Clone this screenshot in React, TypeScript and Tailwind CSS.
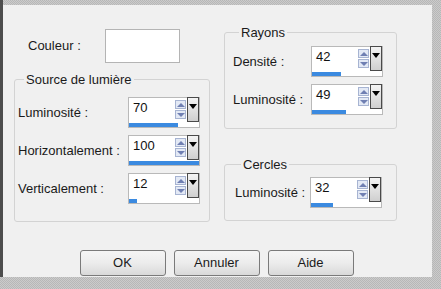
import React from "react";

const font = { fontFamily: '"Liberation Sans", Arial, sans-serif' };

type SpinProps = { value: number; width?: number };

const SpinBox = ({ value, width = 72 }: SpinProps) => {
  const barW = Math.round((value / 100) * (width - 2));
  return (
    <div
      className="flex flex-col h-[31px] border border-[#b9b9b9] bg-white"
      style={{ width }}
    >
      <div className="flex h-[25px]">
        <div className="flex-1 pl-[4px] pt-[2px] text-[13px] leading-[15px] text-[#111]">
          {value}
        </div>
        <div className="flex flex-col gap-[1px] mt-[2px] mr-[1px]">
          <div className="w-[11px] h-[9px] border border-[#a7b4d2] bg-[#e3e9f5] flex items-center justify-center">
            <div className="w-0 h-0 border-l-[4px] border-r-[4px] border-b-[4px] border-l-transparent border-r-transparent border-b-[#6f7fb2]" />
          </div>
          <div className="w-[11px] h-[9px] border border-[#a7b4d2] bg-[#e3e9f5] flex items-center justify-center">
            <div className="w-0 h-0 border-l-[4px] border-r-[4px] border-t-[4px] border-l-transparent border-r-transparent border-t-[#6f7fb2]" />
          </div>
        </div>
        <div className="w-[12px] h-[25px] -mt-[1px] border border-[#4a4a4a] bg-gradient-to-b from-[#f4f4f4] to-[#cfcfcf] flex justify-center pt-[6px]">
          <div className="w-0 h-0 border-l-[4px] border-r-[4px] border-t-[5px] border-l-transparent border-r-transparent border-t-black" />
        </div>
      </div>
      <div className="h-[4px] bg-[#3b8ae0]" style={{ width: barW }} />
    </div>
  );
};

const Row = ({
  label,
  value,
  labelW,
  className = "",
}: {
  label: string;
  value: number;
  labelW: number;
  className?: string;
}) => (
  <div className={"flex items-center " + className}>
    <div className="text-[13px] text-[#1a1a1a]" style={{ width: labelW }}>
      {label}
    </div>
    <SpinBox value={value} />
  </div>
);

const Group = ({
  title,
  className = "",
  children,
}: {
  title: string;
  className?: string;
  children: React.ReactNode;
}) => (
  <fieldset
    className={"border border-[#d3d3d3] rounded-[3px] " + className}
  >
    <legend className="ml-[6px] px-[2px] text-[13px] leading-[15px] text-[#1a1a1a]">
      {title}
    </legend>
    {children}
  </fieldset>
);

const Btn = ({ label }: { label: string }) => (
  <button className="w-[86px] h-[26px] border border-[#7a7a7a] rounded-[3px] bg-gradient-to-b from-[#f5f5f5] via-[#ececec] to-[#d9d9d9] text-[13px] text-[#1a1a1a]">
    {label}
  </button>
);

export default function App() {
  return (
    <div
      className="w-[441px] h-[289px] flex flex-col bg-[repeating-conic-gradient(#cbcbcb_0%_25%,#b7b7b7_0%_50%)] bg-[length:2px_2px]"
      style={font}
    >
      <div className="flex h-[277px]">
        <div className="w-[3px] bg-[#4d4d4d]" />
        <div className="w-[429px] mt-[5px] bg-[#f0f0f0] flex flex-col">
          <div className="flex pl-[11px] pt-[20px] gap-[14px]">
            {/* left column */}
            <div className="w-[196px] flex flex-col">
              <div className="flex items-center mt-[4px]">
                <div className="w-[91px] pl-[14px] text-[13px] text-[#1a1a1a]">
                  Couleur :
                </div>
                <div className="w-[75px] h-[34px] bg-white border border-[#b4b4b4]" />
              </div>
              <Group title="Source de lumière" className="mt-[9px] h-[150px] pl-[3px]">
                <Row label="Luminosité :" value={70} labelW={110} className="mt-[10px]" />
                <Row label="Horizontalement :" value={100} labelW={110} className="mt-[7px]" />
                <Row label="Verticalement :" value={12} labelW={110} className="mt-[7px]" />
              </Group>
            </div>
            {/* right column */}
            <div className="w-[173px] flex flex-col">
              <Group title="Rayons" className="h-[104px] pl-[8px]">
                <Row label="Densité :" value={42} labelW={78} className="mt-[6px]" />
                <Row label="Luminosité :" value={49} labelW={78} className="mt-[7px]" />
              </Group>
              <Group title="Cercles" className="mt-[28px] h-[64px] pl-[10px]">
                <Row label="Luminosité :" value={32} labelW={75} className="mt-[5px]" />
              </Group>
            </div>
          </div>
          <div className="flex justify-center gap-[8px] mt-auto mb-[1px] pr-[2px]">
            <Btn label="OK" />
            <Btn label="Annuler" />
            <Btn label="Aide" />
          </div>
        </div>
        <div className="flex-1" />
      </div>
    </div>
  );
}
